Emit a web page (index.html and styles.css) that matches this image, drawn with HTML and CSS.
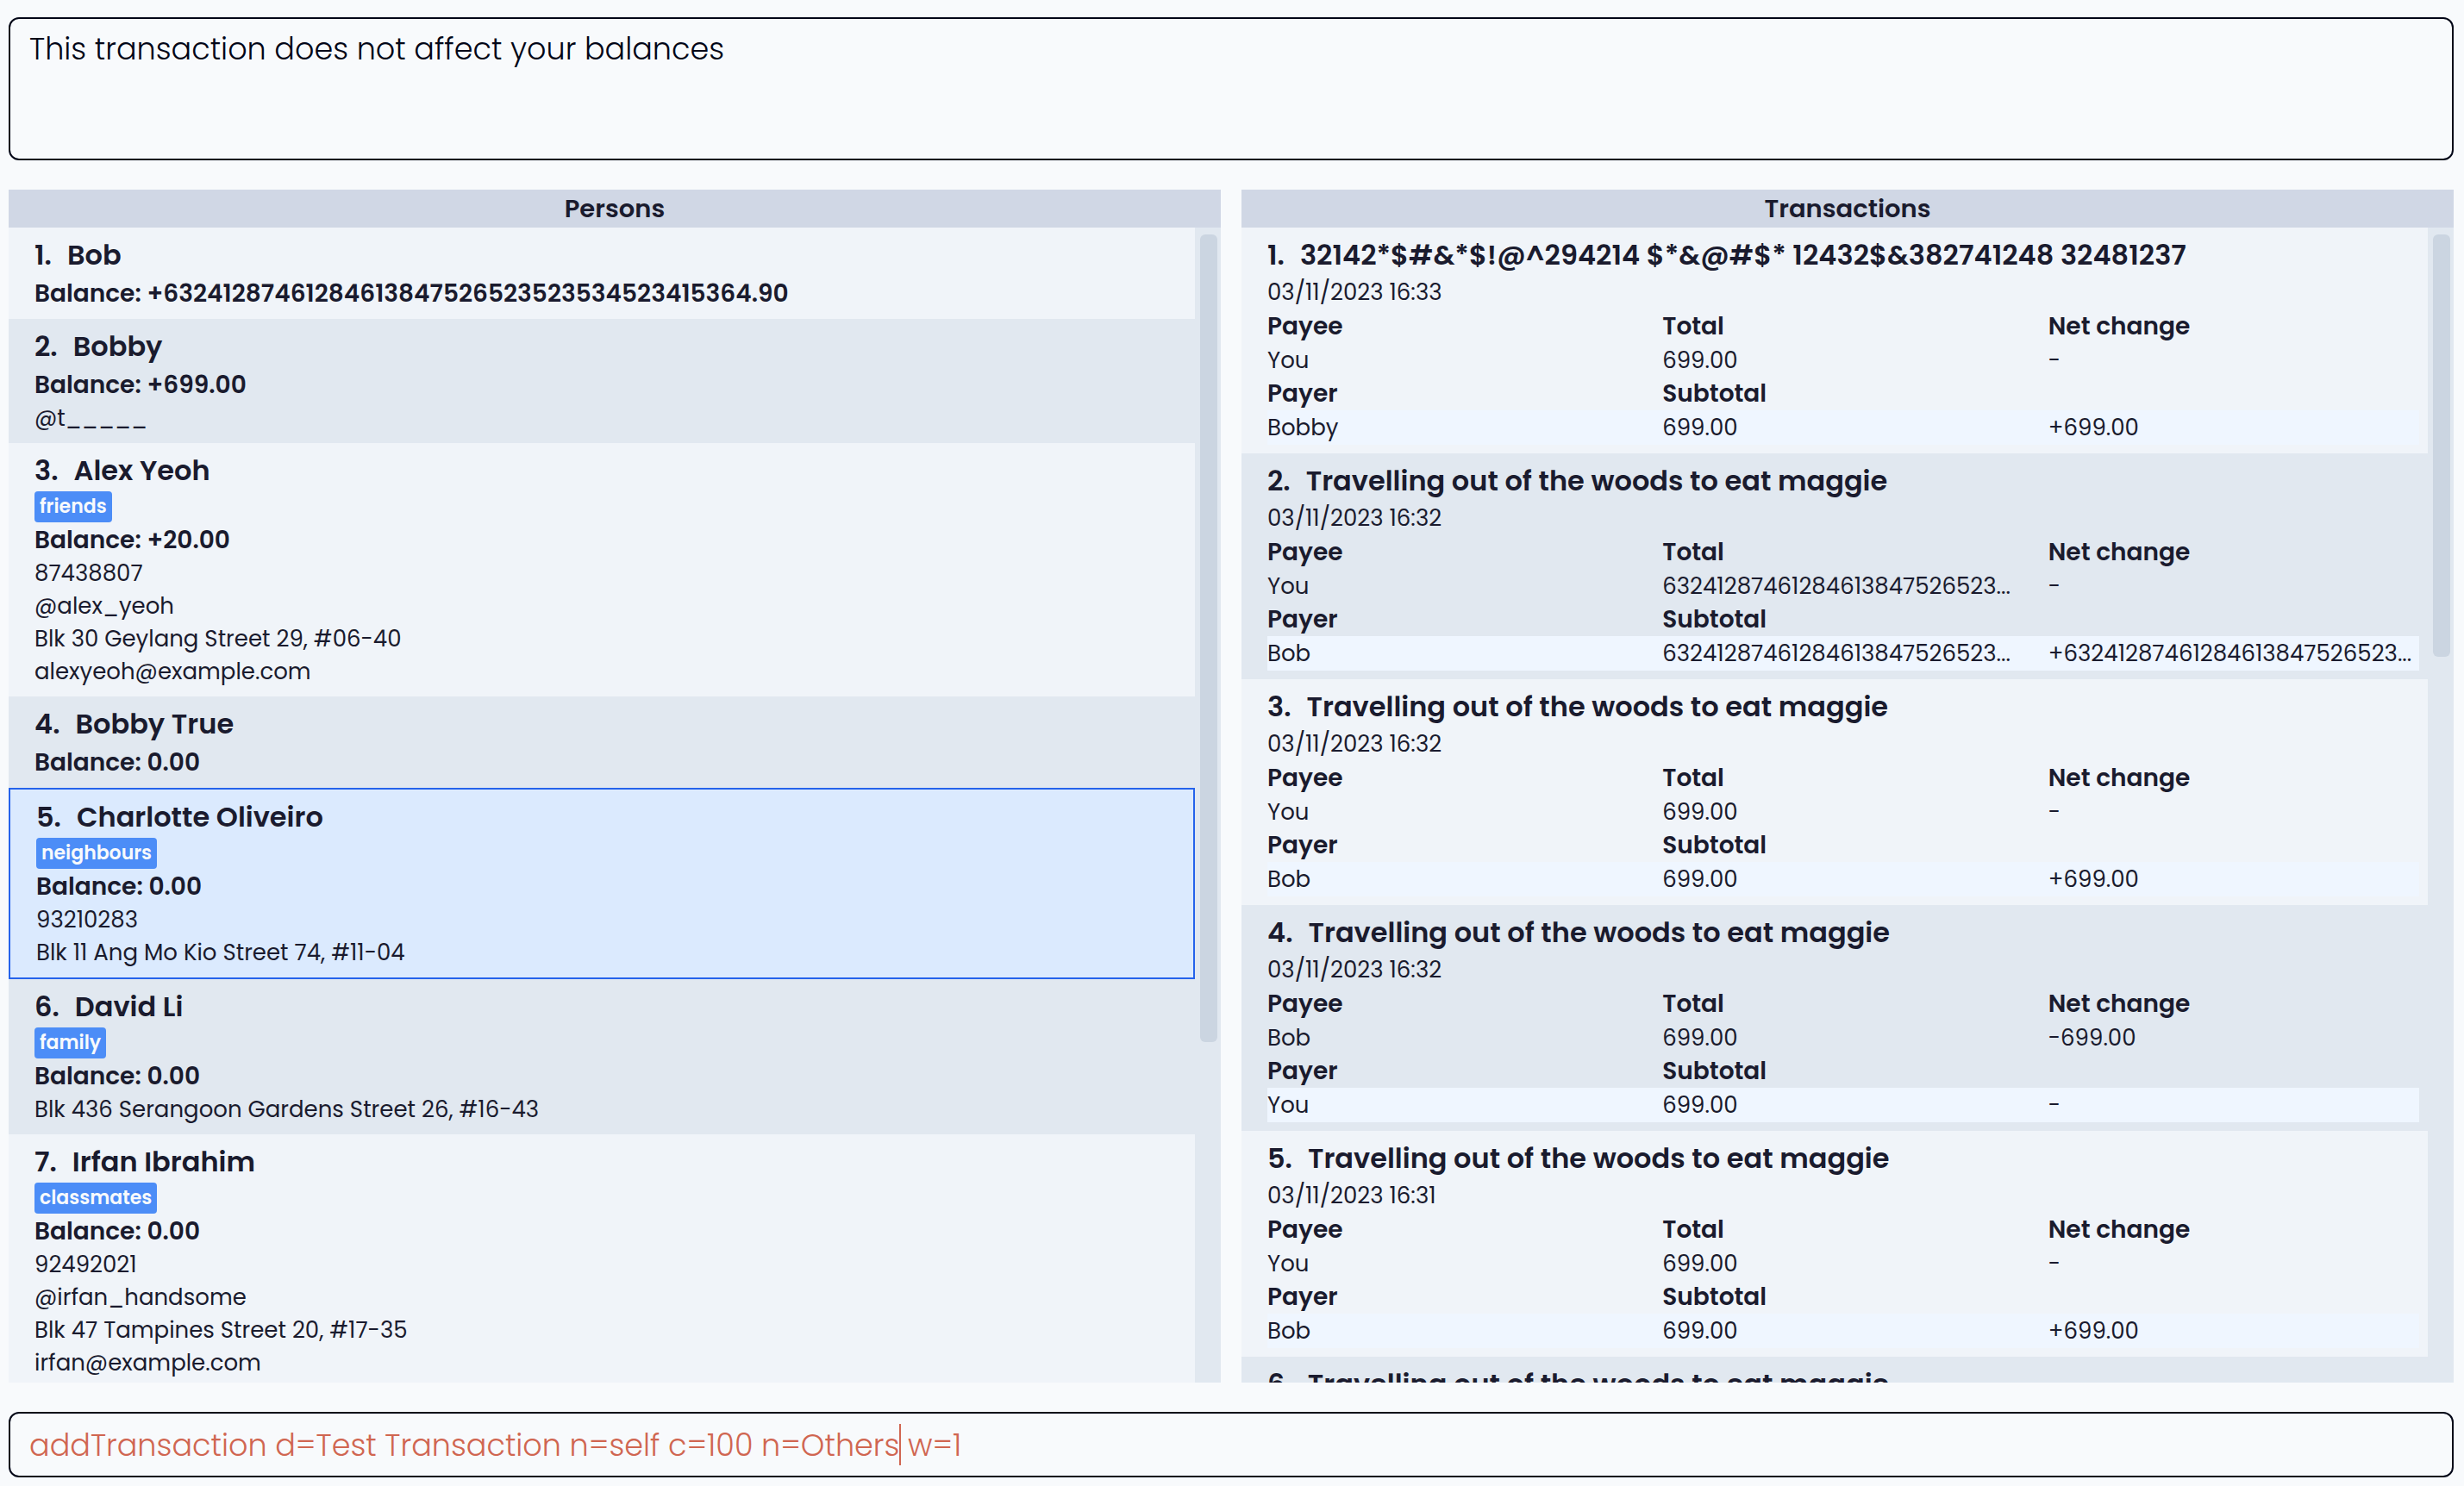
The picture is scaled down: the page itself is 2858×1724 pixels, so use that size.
FILE: index.html
```
<!DOCTYPE html>
<html lang="en">
<head>
<meta charset="utf-8">
<title>Transactions</title>
<link rel="stylesheet" href="styles.css">
</head>
<body>
<main class="app">
  <output class="result">This transaction does not affect your balances</output>
  <div class="panels">
    <section class="panel">
      <h1 class="panel-title">Persons</h1>
      <div class="panel-body">
        <ol class="list">
          <li class="card"><h2 class="name"><span>1.</span><span>Bob</span></h2><p class="balance">Balance: +63241287461284613847526523523534523415364.90</p></li>
          <li class="card"><h2 class="name"><span>2.</span><span>Bobby</span></h2><p class="balance">Balance: +699.00</p><p class="line">@t_____</p></li>
          <li class="card"><h2 class="name"><span>3.</span><span>Alex Yeoh</span></h2><div class="tags"><span class="tag">friends</span></div><p class="balance">Balance: +20.00</p><p class="line">87438807</p><p class="line">@alex_yeoh</p><p class="line">Blk 30 Geylang Street 29, #06-40</p><p class="line">alexyeoh@example.com</p></li>
          <li class="card"><h2 class="name"><span>4.</span><span>Bobby True</span></h2><p class="balance">Balance: 0.00</p></li>
          <li class="card selected"><h2 class="name"><span>5.</span><span>Charlotte Oliveiro</span></h2><div class="tags"><span class="tag">neighbours</span></div><p class="balance">Balance: 0.00</p><p class="line">93210283</p><p class="line">Blk 11 Ang Mo Kio Street 74, #11-04</p></li>
          <li class="card"><h2 class="name"><span>6.</span><span>David Li</span></h2><div class="tags"><span class="tag">family</span></div><p class="balance">Balance: 0.00</p><p class="line">Blk 436 Serangoon Gardens Street 26, #16-43</p></li>
          <li class="card"><h2 class="name"><span>7.</span><span>Irfan Ibrahim</span></h2><div class="tags"><span class="tag">classmates</span></div><p class="balance">Balance: 0.00</p><p class="line">92492021</p><p class="line">@irfan_handsome</p><p class="line">Blk 47 Tampines Street 20, #17-35</p><p class="line">irfan@example.com</p></li>
        </ol>
        <div class="scrollbar"><div class="thumb" style="height: 70.8%"></div></div>
      </div>
    </section>
    <section class="panel">
      <h1 class="panel-title">Transactions</h1>
      <div class="panel-body">
        <ol class="list">
          <li class="card"><h2 class="name"><span>1.</span><span>32142*$#&amp;*$!@^294214 $*&amp;@#$* 12432$&amp;382741248 32481237</span></h2><p class="line">03/11/2023 16:33</p>
            <table class="shares">
              <tr><th>Payee</th><th>Total</th><th>Net change</th></tr>
              <tr><td>You</td><td>699.00</td><td>-</td></tr>
              <tr><th>Payer</th><th>Subtotal</th><th></th></tr>
              <tr class="payer"><td>Bobby</td><td>699.00</td><td>+699.00</td></tr>
            </table></li>
          <li class="card"><h2 class="name"><span>2.</span><span>Travelling out of the woods to eat maggie</span></h2><p class="line">03/11/2023 16:32</p>
            <table class="shares">
              <tr><th>Payee</th><th>Total</th><th>Net change</th></tr>
              <tr><td>You</td><td>63241287461284613847526523...</td><td>-</td></tr>
              <tr><th>Payer</th><th>Subtotal</th><th></th></tr>
              <tr class="payer"><td>Bob</td><td>63241287461284613847526523...</td><td>+63241287461284613847526523...</td></tr>
            </table></li>
          <li class="card"><h2 class="name"><span>3.</span><span>Travelling out of the woods to eat maggie</span></h2><p class="line">03/11/2023 16:32</p>
            <table class="shares">
              <tr><th>Payee</th><th>Total</th><th>Net change</th></tr>
              <tr><td>You</td><td>699.00</td><td>-</td></tr>
              <tr><th>Payer</th><th>Subtotal</th><th></th></tr>
              <tr class="payer"><td>Bob</td><td>699.00</td><td>+699.00</td></tr>
            </table></li>
          <li class="card"><h2 class="name"><span>4.</span><span>Travelling out of the woods to eat maggie</span></h2><p class="line">03/11/2023 16:32</p>
            <table class="shares">
              <tr><th>Payee</th><th>Total</th><th>Net change</th></tr>
              <tr><td>Bob</td><td>699.00</td><td>-699.00</td></tr>
              <tr><th>Payer</th><th>Subtotal</th><th></th></tr>
              <tr class="payer"><td>You</td><td>699.00</td><td>-</td></tr>
            </table></li>
          <li class="card"><h2 class="name"><span>5.</span><span>Travelling out of the woods to eat maggie</span></h2><p class="line">03/11/2023 16:31</p>
            <table class="shares">
              <tr><th>Payee</th><th>Total</th><th>Net change</th></tr>
              <tr><td>You</td><td>699.00</td><td>-</td></tr>
              <tr><th>Payer</th><th>Subtotal</th><th></th></tr>
              <tr class="payer"><td>Bob</td><td>699.00</td><td>+699.00</td></tr>
            </table></li>
          <li class="card"><h2 class="name"><span>6.</span><span>Travelling out of the woods to eat maggie</span></h2></li>
        </ol>
        <div class="scrollbar"><div class="thumb" style="height: 37%"></div></div>
      </div>
    </section>
  </div>
  <div class="command">
    <input class="command-input" type="text" aria-label="Command" spellcheck="false" value="addTransaction d=Test Transaction n=self c=100 n=Others w=1">
    <span class="caret"></span>
  </div>
</main>
</body>
</html>
```
FILE: styles.css
```
* { box-sizing: border-box; }
body {
  margin: 0;
  background: #f8fafc;
  color: #1a1b2e;
  font-family: Poppins, Inter, "Open Sans", sans-serif;
  font-size: 26px;
  line-height: 38px;
}
h1, h2, p, ol { margin: 0; padding: 0; }
.app {
  display: flex;
  flex-direction: column;
  gap: 34px;
  height: 100vh;
  padding: 20px 12px 10px 10px;
}
.result {
  display: block;
  flex: none;
  min-height: 166px;
  padding: 8px 22px;
  border: 2px solid #020617;
  border-radius: 12px;
  color: #020617;
  font-size: 35px;
  font-weight: 300;
  line-height: 54px;
}
.panels {
  display: grid;
  grid-template-columns: 1fr 1fr;
  gap: 24px;
  flex: 1;
  min-height: 0;
}
.panel { display: flex; flex-direction: column; min-width: 0; min-height: 0; }
.panel-title {
  background: #d0d7e5;
  font-size: 29px;
  font-weight: 600;
  line-height: 44px;
  text-align: center;
}
.panel-body { display: flex; flex: 1; min-height: 0; background: #e1e8f0; }
.list { flex: 1; min-width: 0; overflow: hidden; list-style: none; }
.card { padding: 8px 10px 10px 30px; background: #f0f4f9; }
.card:nth-child(even) { background: #e1e8f0; }
.card.selected { border: 2px solid #2563eb; background: #dbeafe; }
.name {
  display: flex;
  gap: 18px;
  font-size: 32px;
  font-weight: 600;
  line-height: 48px;
  white-space: nowrap;
}
.balance { margin-top: 2px; font-size: 28px; font-weight: 600; }
.tags { display: flex; gap: 6px; }
.tag {
  padding: 0 6px;
  border-radius: 4px;
  background: #4c8df7;
  color: #f8fafc;
  font-size: 22px;
  font-weight: 600;
  line-height: 36px;
}
.shares { width: 100%; margin-top: 2px; border-collapse: collapse; table-layout: fixed; }
.shares th, .shares td { padding: 0; text-align: left; white-space: nowrap; }
.shares th { font-size: 28px; font-weight: 600; line-height: 38px; }
.shares td { line-height: 40px; }
.shares th:nth-child(1) { width: 34.3%; }
.shares th:nth-child(2) { width: 33.5%; }
.payer { background: #eff6ff; }
.scrollbar { flex: none; width: 30px; padding: 8px 4px 8px 6px; }
.thumb { border-radius: 6px; background: #cbd5e1; }
.command { position: relative; flex: none; }
.command-input {
  display: block;
  width: 100%;
  height: 76px;
  padding: 0 22px;
  border: 2px solid #020617;
  border-radius: 12px;
  background: transparent;
  color: #d06651;
  font: inherit;
  font-size: 35px;
  font-weight: 300;
  outline: none;
}
.caret {
  position: absolute;
  top: 14px;
  left: 1033px;
  width: 2px;
  height: 48px;
  background: #d06651;
}
```
